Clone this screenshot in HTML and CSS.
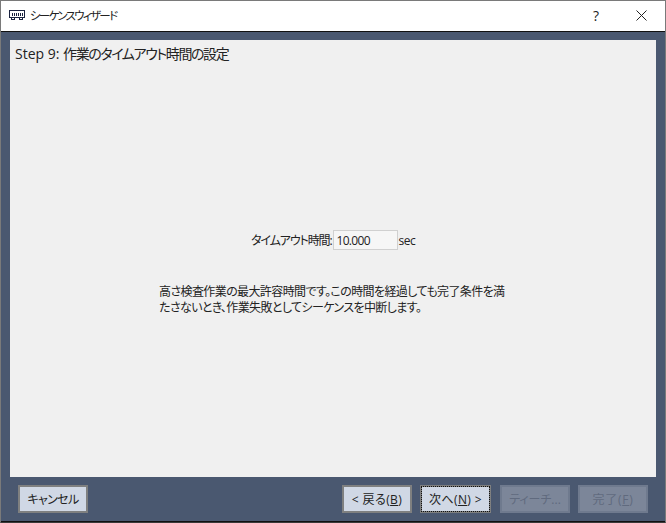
FILE: index.html
```html
<!DOCTYPE html>
<html lang="ja">
<head>
<meta charset="utf-8">
<title>シーケンスウィザード</title>
<link rel="stylesheet" href="styles.css">
</head>
<body>
<div class="window">
  <header class="titlebar">
    <svg class="app-icon" width="16" height="12" viewBox="0 0 16 12" fill="none" stroke="#1a2340" stroke-width="1" shape-rendering="crispEdges">
      <rect x="0.5" y="1.5" width="15" height="7"/>
      <path d="M3 3.5v3M5 3.5v3M7 3.5v3M9 3.5v3M11 3.5v3M13 3.5v3"/>
      <path d="M2.5 9v1.5h3V9M10.5 9v1.5h3V9"/>
    </svg>
    <span class="title">シーケンスウィザード</span>
    <span class="help">?</span>
    <svg class="close" width="11" height="11" viewBox="0 0 11 11" fill="none" stroke="#222" stroke-width="1"><path d="M0.5 0.5l10 10M10.5 0.5l-10 10"/></svg>
  </header>
  <div class="client">
    <main class="panel">
      <h1 class="step">Step 9: <span class="step-ja">作業のタイムアウト時間の設定</span></h1>
      <div class="center">
        <div class="field">
          <label class="label">タイムアウト時間:</label>
          <div class="input">10.000</div>
          <span class="unit">sec</span>
        </div>
        <p class="desc">高さ検査作業の最大許容時間です。この時間を経過しても完了条件を満<br>たさないとき、作業失敗としてシーケンスを中断します。</p>
      </div>
    </main>
    <footer class="buttons">
      <button class="btn cancel">キャンセル</button>
      <span class="spacer"></span>
      <button class="btn wide">&lt; 戻る(<u>B</u>)</button>
      <button class="btn wide next focus">次へ(<u>N</u>) &gt;</button>
      <button class="btn off">ティーチ...</button>
      <button class="btn off finish">完了(<u>F</u>)</button>
    </footer>
  </div>
</div>
</body>
</html>
```
FILE: styles.css
```css
* { box-sizing: border-box; }
html, body { margin: 0; padding: 0; }
body {
  width: 666px;
  height: 523px;
  overflow: hidden;
  font-family: "Open Sans", "Noto Sans CJK JP", sans-serif;
  font-size: 12px;
  font-feature-settings: "palt";
  color: #222;
}
.window {
  width: 666px;
  height: 523px;
  display: flex;
  flex-direction: column;
  border: 1px solid #7a7a7a;
  border-bottom-color: #3a3a3a;
  background: #fff;
}
.titlebar {
  height: 30px;
  flex: none;
  display: flex;
  align-items: center;
  padding: 0 18px 2px 8px;
  background: #fff;
}
.app-icon { margin-right: 5px; }
.title { flex: 1; font-size: 11.5px; letter-spacing: -1.7px; color: #222; }
.help { font-size: 14px; margin-right: 37px; color: #222; }
.client {
  flex: 1;
  display: flex;
  flex-direction: column;
  background: #4a5870;
  border-top: 1px solid #111;
  border-bottom: 1px solid #111;
  padding: 8px 9px 8px 9px;
}
.panel {
  height: 437px;
  flex: none;
  background: #f0f0f0;
  display: flex;
  flex-direction: column;
  padding: 4px 5px;
}
.step { margin: 0; font-size: 14px; font-weight: 400; line-height: 19px; color: #222; }
.step-ja { letter-spacing: -1.4px; }
.center { padding: 167px 0 0 144px; }
.field { display: flex; align-items: center; height: 20px; padding-left: 92px; }
.label { margin-right: 1px; letter-spacing: -1.1px; }
.input {
  width: 65px;
  height: 20px;
  line-height: 19px;
  padding-left: 3px;
  background: #f6f6f6;
  border: 1px solid #d0d0d0;
  font-size: 12px;
  letter-spacing: -0.7px;
}
.unit { margin-left: 1px; letter-spacing: -0.5px; }
.desc { margin: 34px 0 0; line-height: 16px; width: 360px; white-space: nowrap; letter-spacing: -0.6px; }
.buttons {
  display: flex;
  gap: 8px;
  padding: 8px 8px 0;
}
.spacer { flex: 1; }
.btn {
  width: 70px;
  height: 28px;
  padding: 0;
  font: inherit;
  font-feature-settings: inherit;
  color: #222;
  background: #d0d8e5;
  border: 2px solid #7f8080;
}
.btn u { text-underline-offset: 1px; }
.cancel { letter-spacing: -0.6px; }
.wide { letter-spacing: 0.4px; }
.finish { letter-spacing: 0.7px; }
.next { margin-right: 1px; width: 71px; }
.focus { outline: 1px dotted #111; outline-offset: -2px; }
.off { background: #7c8699; border-color: #6f7a8e; color: #606a7e; }
```
